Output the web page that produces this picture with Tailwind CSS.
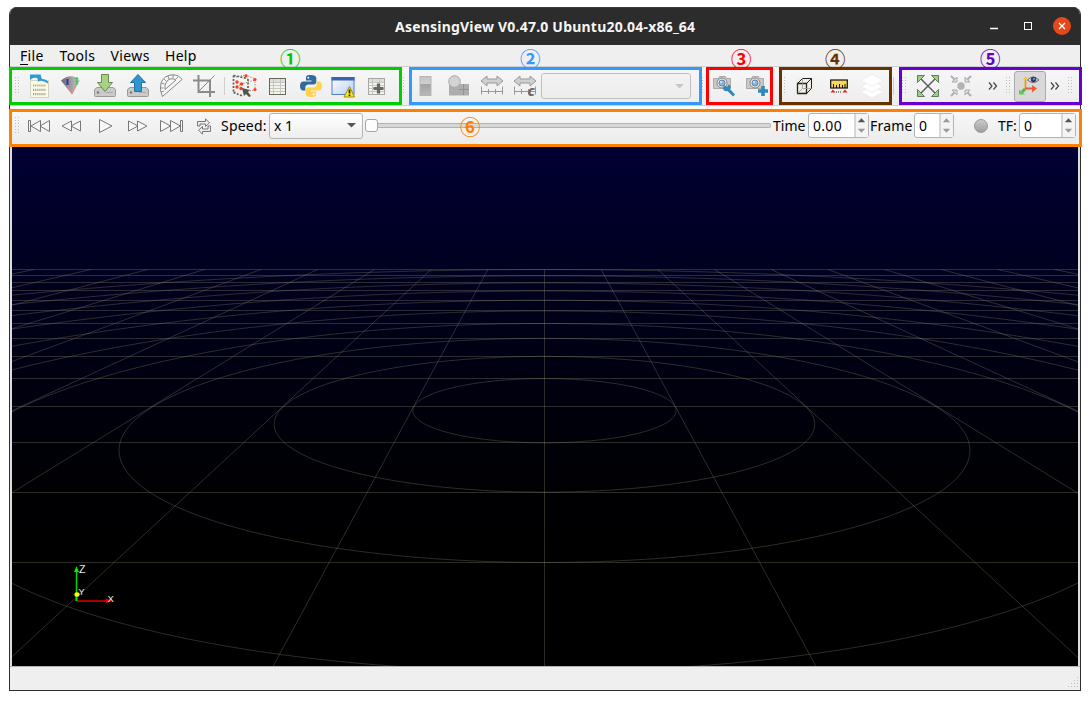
<!DOCTYPE html>
<html lang="en">
<head>
<meta charset="utf-8">
<title>AsensingView</title>
<script src="https://cdn.jsdelivr.net/npm/@tailwindcss/browser@4"></script>
</head>
<body class="relative h-[701px] w-[1091px] overflow-hidden bg-white font-['Noto_Sans','Open_Sans',sans-serif] text-[14px] text-black">
<svg width="0" height="0" class="absolute">
  <defs>
    <pattern id="dots" width="3" height="3" patternUnits="userSpaceOnUse"><rect width="1" height="1" fill="#bdbdbd"/></pattern>
    <linearGradient id="gr" x2="0" y2="1"><stop stop-color="#c4c4c4"/><stop offset=".38" stop-color="#d0d0d0"/><stop offset=".4" stop-color="#a2a2a2"/><stop offset="1" stop-color="#b9b9b9"/></linearGradient>
    <linearGradient id="win" x2="1" y2="1"><stop stop-color="#fff"/><stop offset="1" stop-color="#b5cdf5"/></linearGradient>
    <linearGradient id="fan"><stop stop-color="#666"/><stop offset=".6" stop-color="#a5a5a5"/><stop offset="1" stop-color="#ccc"/></linearGradient>
    <symbol id="drive" viewBox="0 0 24 24"><path d="M4 13.500h16l2.500 2v6q0 1-1 1h-19q-1 0-1-1v-6z" fill="#cacaca" stroke="#999"/><circle cx="5" cy="18.500" r="1.200" fill="#777"/><path d="M13 18.500h7" stroke="#aaa"/></symbol>
    <symbol id="camera" viewBox="0 0 24 24"><path d="M1.500 4.500h5l1-2h6l1 2h4v10h-17z" fill="#c9c9c9" stroke="#aaa"/><circle cx="10" cy="9" r="5" fill="#e6e6e6" stroke="#888"/><circle cx="10" cy="9" r="3" fill="#8fb4d4" stroke="#5f87ab"/><circle cx="9" cy="8" r="1" fill="#dcecf8"/></symbol>
    <symbol id="table" viewBox="0 0 17 17"><rect x=".5" y=".5" width="16" height="16" fill="#f4f4ee"/><path d="M1 1h15v3H1z" fill="#ddd"/><path d="M1 4.500h15M1 7.500h15M1 10.500h15M1 13.500h15M4.500 1v15M11.500 1v15" stroke="#c6c6be"/><rect x=".5" y=".5" width="16" height="16" fill="none" stroke="currentColor"/></symbol>
    <symbol id="width" viewBox="0 0 24 24"><path d="M1 7l6-5v3h10V2l6 5-6 5V9H7v3z" fill="#d0d0d0" stroke="#999"/><path d="M1.500 12.500v8M22.500 12.500v8M1.500 17.500h21M8.500 15v5M15.500 15v5" stroke="#999" fill="none"/></symbol>
    <symbol id="spin" viewBox="0 0 14 25"><path d="M0 0v25" stroke="#b5b5b5" stroke-width="2"/><path d="M3.500 9L7.500 4.500 11.500 9z" fill="currentColor"/><path d="M3.500 16L7.500 20.500 11.500 16z" fill="#999"/></symbol>
  </defs>
</svg>

<main class="absolute top-[7px] left-[9px] flex h-[684px] w-[1072px] flex-col overflow-hidden rounded-t-[8px] border border-t-0 border-[#2f2f30] bg-[#efefef]">
  <header class="relative flex h-[38px] shrink-0 items-center bg-[#2c2c2c] pt-px pr-[8px] shadow-[inset_0_1px_0_#3d3d3d]">
    <h1 class="ml-[385px] w-[302px] text-[14px] leading-5 font-bold tracking-[0.21px] whitespace-nowrap text-[#f5f5f5]">AsensingView V0.47.0 Ubuntu20.04-x86_64</h1>
    <svg class="ml-auto" width="84" height="20" fill="none" stroke="#fff"><path d="M2 11.500h8" stroke-width="1.300"/><rect x="36.500" y="5.500" width="7" height="7"/><circle cx="74" cy="9" r="9" fill="#e5491b" stroke="none"/><path d="M71 6l6 6M77 6l-6 6" stroke-width="1.300"/></svg>
  </header>

  <nav class="flex h-[21px] shrink-0 items-center pl-[10px] leading-5 whitespace-nowrap">
    <span class="w-[39.5px] tracking-[0.3px]"><span class="inline-block h-[17px] border-b border-black leading-4">F</span>ile</span>
    <span class="w-[51px] tracking-[0.35px]">Tools</span>
    <span class="w-[54.5px] tracking-[0.4px]">Views</span>
    <span class="tracking-[0.3px]">Help</span>
  </nav>

  <div class="flex h-10 shrink-0 items-center border-y border-[#cfcfcf] bg-gradient-to-b from-[#f7f7f7] to-[#ededed]">
    <svg class="ml-[5px] mr-[2px]" width="5" height="18"><rect width="5" height="18" fill="url(#dots)"/></svg>
    <div class="flex">
      <div class="flex w-[33px] justify-center"><svg width="24" height="24"><path d="M3.500 6.500h18v17h-18z" fill="#fafae6" stroke="#d2d2be"/><path d="M3 6V.500h11l7 7v2Q14 5 11 8q0-3-1-4Q6 3 3 6z" fill="#2f9bd0"/><path d="M13.500.500H16l5.500 6.500Q17 4.500 15 5z" fill="#f3fafd"/><path d="M6 11.500h13M6 15.800h13M6 20.100h13" stroke="#a5a59b" stroke-width="2.200" stroke-dasharray="1.200 .900"/></svg></div>
      <div class="flex w-[33px] justify-center"><svg width="24" height="24"><path d="M1 6.500Q11-2 20 6.500L12 20.500z" fill="url(#fan)"/><path d="M7 10.500l5 9.500 4-9.500" stroke="#f08a8a" fill="none"/><path d="M7.500 5v6" stroke="#2431c4" stroke-width="2"/><path d="M16.800 3.500v7" stroke="#0cd142" stroke-width="2.600" stroke-dasharray="2 1"/></svg></div>
      <div class="flex w-[33px] justify-center"><svg width="24" height="24"><use href="#drive"/><path d="M8.500.500h7v8h4L12 17.500 4.500 8.500h4z" fill="#a8d184" stroke="#668e4e"/></svg></div>
      <div class="flex w-[33px] justify-center"><svg width="24" height="24"><use href="#drive"/><path d="M8.500 17.500h7v-9h4L12 .500 4.500 8.500h4z" fill="#2b97d0" stroke="#24709e"/></svg></div>
      <div class="flex w-[33px] justify-center"><svg width="24" height="24" fill="none" stroke="#858585"><path d="M3.500 22.500L23 5.500Q20 1 14 .800Q5 1 2 9Q0 16 3.500 22.500z" fill="#f7f7f7"/><path d="M6 15.500L17 6Q12 3 8 7Q5 11 6 15.500z"/><path d="M14 1v3M9 2l1 3M5 5l2 2M2.500 9l3 1M1.500 14h3M2 18l3-1M19 3l-2 2" stroke-width=".9"/></svg></div>
      <div class="flex w-[33px] justify-center"><svg width="24" height="24" fill="none" stroke="#8a8a8a" stroke-width="2"><path d="M6.500 1v17H23M1 6.500h17V23"/><path d="M7 17L22.500 1.500" stroke-width="1"/></svg></div>
    </div>
    <div class="ml-[4px] mr-[3px] h-[18px] w-px bg-[#cecece]"></div>
    <div class="flex">
      <div class="flex w-[33px] justify-center"><svg width="25" height="24"><path d="M1.500 1.500v17h2M1.500 1.500l14 3M1.500 18.500l9 3.500M16 5v10" fill="none" stroke="#5f5f50" stroke-width="1.700" stroke-dasharray="2 1.500"/><path d="M4 3l10-2M14 1l9 4v11l-6 1M5 13l4-3 14-4" fill="none" stroke="#777768" stroke-dasharray="1 1.500"/><g fill="#ff3c16"><circle cx="5" cy="8" r="1.700"/><circle cx="9.500" cy="10" r="1.700"/><circle cx="5" cy="13" r="1.700"/><circle cx="9" cy="14.500" r="1.700"/><circle cx="14" cy="1.800" r="1.600"/><circle cx="23" cy="5.500" r="1.600"/><circle cx="23" cy="15.500" r="1.600"/></g><path d="M10 14l8 2-2 2 3 4-2 1-3-3-2 2z" fill="#555448"/></svg></div>
      <div class="flex w-[33px] items-center justify-center text-[#686858]"><svg width="17" height="17"><use href="#table"/></svg></div>
      <div class="flex w-[33px] justify-center"><svg width="24" height="24"><path d="M11.500 1C7 1 7 2.500 7 4v2.500h5.500v1H4.500C2 7.500 1 9.500 1 12s1 4.500 3 4.500h2.300v-3c0-2 1.500-3 3-3h5.400c1.600 0 2.600-1 2.600-2.500V4c0-2-2-3-5.800-3z" fill="#316b9d"/><path d="M12.500 23c4.500 0 4.500-1.500 4.500-3v-2.500h-5.500v-1h8c2.500 0 3.500-2 3.500-4.500s-1-4.500-3-4.500h-2.300v3c0 2-1.500 3-3 3H9.300c-1.600 0-2.600 1-2.600 2.500V20c0 2 2 3 5.800 3z" fill="#ffd34c"/><circle cx="9.300" cy="3.800" r="1" fill="#fff"/><circle cx="14.700" cy="20.200" r="1" fill="#fff"/></svg></div>
      <div class="flex w-[33px] justify-center"><svg width="25" height="24"><rect x="1" y="3.500" width="22" height="17" fill="url(#win)" stroke="#527fc6"/><path d="M.500 3h23v3.500H.500z" fill="#3564b6"/><path d="M18.500 12.500l5 10.500h-10.500z" fill="#ffe61a" stroke="#9b8c14" stroke-linejoin="round"/><path d="M18.500 15.500v4M18.500 20.500v1.500" stroke="#222" stroke-width="1.700"/></svg></div>
      <div class="flex w-[33px] items-center justify-center text-[#a7a7a7]"><svg width="17" height="17"><use href="#table"/><path d="M10.500 5.500v10M5.500 10.500h10" stroke="#666" stroke-width="3.200"/></svg></div>
    </div>
    <svg class="ml-[10px]" width="2" height="18"><rect width="2" height="18" fill="url(#dots)"/></svg>
    <div class="ml-[4px] flex">
      <div class="flex w-[33px] justify-center"><svg width="24" height="24"><rect x="6" y="2.500" width="11" height="19" fill="url(#gr)" stroke="#b5b5b5"/></svg></div>
      <div class="flex w-[33px] justify-center"><svg width="24" height="24"><path d="M2 10h20v11.500H2z" fill="#adadad"/><path d="M12 15.500h10M16.500 10v11" stroke="#929292"/><circle cx="7.500" cy="7.500" r="5.800" fill="#d3d3d3" stroke="#aaa"/></svg></div>
      <div class="flex w-[33px] justify-center"><svg width="24" height="24"><use href="#width"/></svg></div>
      <div class="flex w-[33px] justify-center"><svg width="24" height="24"><use href="#width"/><text x="14.500" y="21.500" font-size="15" font-weight="bold" font-style="italic" fill="#666">c</text></svg></div>
    </div>
    <div class="flex h-[26px] w-[150px] items-center justify-end rounded-[3px] border border-[#bebebe] bg-gradient-to-b from-[#f3f3f3] to-[#ededed] pr-[6px]"><svg width="9" height="5"><path d="M0 0h9L4.500 4.500z" fill="#c7c7c7"/></svg></div>
    <svg class="ml-[11px]" width="2" height="18"><rect width="2" height="18" fill="url(#dots)"/></svg>
    <div class="ml-[3px] flex">
      <div class="flex w-[33px] justify-center"><svg width="24" height="24"><use href="#camera"/><path d="M12 11l3 2 1.500-2.500Q20 12 18 15l5 5.500-2 2-5.500-5.500q-4 1-4.500-3z" fill="#3288bd"/></svg></div>
      <div class="flex w-[33px] justify-center"><svg width="24" height="24"><use href="#camera"/><path d="M18 12v10M13 17h10" stroke="#3388ba" stroke-width="3.600"/></svg></div>
    </div>
    <svg class="ml-[8px] mr-[2px]" width="5" height="18"><rect width="5" height="18" fill="url(#dots)"/></svg>
    <div class="flex">
      <div class="flex w-[34px] items-center justify-center"><svg width="18" height="18"><path fill="#f0f0e4" d="M0 0h18v18H0z"/><g fill="none" stroke="#222"><path d="M1.500 6.500h9v10h-9z" stroke-width="1.300"/><path d="M1.500 6.500l5-5h9l-5 5M15.500 1.500v10l-5 5"/><path d="M1.500 16.500l5-5h9M6.500 1.500v10" stroke="#999" stroke-width=".8"/></g></svg></div>
      <div class="flex w-[33px] items-center justify-center"><svg width="18" height="15"><rect x=".7" y="1" width="16.600" height="8" fill="#f7d85b" stroke="#111" stroke-width="1.200"/><path d="M3.500 9V5M6.500 9V6M9.500 9V5M12.500 9V6M15 9V5" stroke="#111"/><path d="M.500 13.500l2.500-3 2.500 3zM12.500 13.500l2.500-3 2.500 3z" fill="#e52218"/><path d="M6 13h6" stroke="#222" stroke-dasharray="1 1"/></svg></div>
      <div class="flex w-[33px] justify-center"><svg width="24" height="24" fill="#fff" stroke="#ebebeb" stroke-width=".8"><path d="M12 12l11 6-11 6-11-6z"/><path d="M12 6.500l11 6-11 6-11-6z"/><path d="M12 .500l11 6-11 6-11-6z"/></svg></div>
    </div>
    <div class="ml-[5px] h-[18px] w-px bg-[#d0d0d0]"></div>
    <svg class="ml-[8px]" width="5" height="18"><rect width="5" height="18" fill="url(#dots)"/></svg>
    <div class="ml-[4px] flex">
      <div class="flex w-[33px] justify-center"><svg width="24" height="24"><path d="M4 4l16 16M20 4L4 20" stroke="#5e5e5e" stroke-width="1.500"/><path d="M1.500 1.500h7L6 4 4 6 1.500 8.500zM22.500 1.500h-7L18 4l2 2 2.500 2.500zM1.500 22.500h7L6 20l-2-2-2.500-2.500zM22.500 22.500h-7L18 20l2-2 2.500-2.500z" fill="#9fd08a" stroke="#56704d" stroke-width=".9"/></svg></div>
      <div class="flex w-[33px] justify-center"><svg width="24" height="24"><path d="M2 2l5 5M22 2l-5 5M2 22l5-5M22 22l-5-5" stroke="#b0b0b0" stroke-width="2"/><path d="M8 3v5H3L5.500 5.500zM16 3v5h5l-2.500-2.500zM8 21v-5H3l2.500 2.500zM16 21v-5h5l-2.500 2.500z" fill="#dedede" stroke="#aaa"/><circle cx="12" cy="12" r="3.700" fill="#b2b2b2"/></svg></div>
    </div>
    <svg class="ml-[11px]" width="10" height="10" fill="none" stroke="#444" stroke-width="1.200"><path d="M1 1.500L4 5 1 8.500M5.500 1.500l3 3.500-3 3.500"/></svg>
    <svg class="ml-[8px]" width="5" height="18"><rect width="5" height="18" fill="url(#dots)"/></svg>
    <div class="ml-[3px] flex h-[31px] w-[32px] items-center justify-center rounded-[3px] border border-[#aaa] bg-[#d9d9d9]"><svg width="24" height="24"><path d="M7.500 15V4" stroke="#eb9b0b" stroke-width="1.800"/><path d="M5 6l2.500-4L10 6z" fill="#ffc027"/><path d="M7 14.500h9" stroke="#dd6335" stroke-width="2"/><path d="M14 11l5 3.500-5 4z" fill="#f05c32"/><path d="M7 15l-3 3" stroke="#53b34c" stroke-width="3"/><path d="M1 15.500v5h6z" fill="#5cce4f"/><path d="M9.500 6Q15 0 21 6Q15 11 9.500 6z" fill="#e8e8ef" stroke="#666"/><circle cx="15.500" cy="5.500" r="2.800" fill="#333d79"/><circle cx="16" cy="5" r=".8" fill="#ddd"/></svg></div>
    <svg class="ml-[4px]" width="10" height="10" fill="none" stroke="#444" stroke-width="1.200"><path d="M1 1.500L4 5 1 8.500M5.500 1.500l3 3.500-3 3.500"/></svg>
    <svg class="ml-[8px]" width="5" height="18"><rect width="5" height="18" fill="url(#dots)"/></svg>
  </div>

  <div class="flex h-[41px] shrink-0 items-center bg-gradient-to-b from-[#fafafa] to-[#eaeaea] pb-[2px] leading-5 whitespace-nowrap">
    <svg class="ml-[5px] mr-[2px]" width="5" height="18"><rect width="5" height="18" fill="url(#dots)"/></svg>
    <div class="flex pt-px">
      <div class="flex w-[33px] items-center justify-center"><svg width="24" height="14" fill="#f8f8f8" stroke="#777"><path d="M1.500 1.500h2v11h-2zM13.500 1.500v11L4 7zM22.500 1.500v11L13 7z"/></svg></div>
      <div class="flex w-[33px] items-center justify-center"><svg width="24" height="14" fill="#f8f8f8" stroke="#777"><path d="M11.500 2v10L2 7zM20.500 2v10L11 7z"/></svg></div>
      <div class="flex w-[33px] items-center justify-center"><svg width="24" height="16" fill="#f8f8f8" stroke="#777"><path d="M6.500 1.500v13L19 8z"/></svg></div>
      <div class="flex w-[33px] items-center justify-center"><svg width="24" height="14" fill="#f8f8f8" stroke="#777"><path d="M2.500 2v10L12 7zM11.500 2v10L21 7z"/></svg></div>
      <div class="flex w-[33px] items-center justify-center"><svg width="24" height="14" fill="#f8f8f8" stroke="#777"><path d="M21.500 1.500h2v11h-2zM1.500 1.500v11L11.500 7zM11.500 1.500v11L21.500 7z"/></svg></div>
      <div class="flex w-[33px] items-center justify-center"><svg width="16" height="17" fill="#eee" stroke="#777"><path d="M1.500 8V3.500h8V.800L13.500 4.800l-4 3.700V6h-5.500v2zM14.500 8v5.500h-8v2.700l-4-4 4-3.700V11h5.500V8z"/></svg></div>
    </div>
    <span class="ml-[1px] w-[48px] tracking-[0.2px]">Speed:</span>
    <div class="flex h-[26px] w-[94px] items-center justify-between rounded-[3px] border border-[#b4b4b4] bg-gradient-to-b from-white to-[#eee] px-[4px]"><span>x 1</span><svg class="mr-[2px]" width="9" height="5"><path d="M0 0h9L4.500 4.500z" fill="#555"/></svg></div>
    <div class="ml-[2px] flex w-[406px] items-center"><i class="h-[13px] w-[13px] shrink-0 rounded-[3px] border border-[#a5a5a5] bg-[#fdfdfd]"></i><i class="h-[5px] flex-1 rounded-r-[2px] border border-l-0 border-[#b2b2b2] bg-[#d8d8d8]"></i></div>
    <span class="ml-[2px] w-[35px]">Time</span>
    <div class="flex h-[25px] w-[61px] items-center justify-between rounded-[3px] border border-[#b4b4b4] bg-white pl-[4px]"><span class="tracking-[0.3px]">0.00</span><svg class="h-[23px] w-[14px] shrink-0 bg-[#f4f4f4] text-[#555]" viewBox="0 0 14 25"><use href="#spin"/></svg></div>
    <span class="ml-[1px] w-[44px] tracking-[0.2px]">Frame</span>
    <div class="flex h-[25px] w-[40px] items-center justify-between rounded-[3px] border border-[#b4b4b4] bg-white pl-[4px]"><span>0</span><svg class="h-[23px] w-[14px] shrink-0 bg-[#f4f4f4] text-[#999]" viewBox="0 0 14 25"><use href="#spin"/></svg></div>
    <i class="ml-[20px] h-[14px] w-[14px] rounded-full border border-[#999] bg-gradient-to-b from-[#ccc] to-[#9e9e9e]"></i>
    <span class="ml-[10px] w-[21px]">TF:</span>
    <div class="flex h-[25px] w-[57px] items-center justify-between rounded-[3px] border border-[#b4b4b4] bg-white pl-[4px]"><span>0</span><svg class="h-[23px] w-[14px] shrink-0 bg-[#f4f4f4] text-[#555]" viewBox="0 0 14 25"><use href="#spin"/></svg></div>
  </div>

  <section class="h-[519px] shrink-0 border-x-2 border-[#dedede]">
    <div class="h-[519px] w-[1066px] bg-gradient-to-b from-[#000033] to-black">
      <svg width="1066" height="519" viewBox="12 147 1066 519" fill="none">
        <g id="grid" stroke="#84806a" stroke-opacity=".34"></g>
        <path d="M76.500 601V571" stroke="#00d800" stroke-width="1.500"/><path d="M77 601h30" stroke="#d80000" stroke-width="1.500"/>
        <path d="M76.500 566l2.500 6h-5z" fill="#00f000"/><path d="M106 598.500l7 2.500-7 2z" fill="#e00000"/><ellipse cx="77" cy="594.500" rx="2.600" ry="2.300" fill="#ff0"/><path d="M76.500 597v4" stroke="#00d800" stroke-width="2"/>
        <g fill="#eee" font-size="10.500" font-family="Liberation Sans, sans-serif"><text x="79" y="572.500">Z</text><text x="78.500" y="595" font-size="9">Y</text><text x="107.500" y="601.500" font-size="9.500">X</text></g>
      </svg>
    </div>
  </section>

  <footer class="flex flex-1 items-end justify-end border-t border-[#b5b5b5] pr-px pb-px"><svg width="12" height="12" fill="#bbb"><path d="M10 0h1v1h-1zM7 3h1v1H7zM10 3h1v1h-1zM4 6h1v1H4zM7 6h1v1H7zM10 6h1v1h-1zM1 9h1v1H1zM4 9h1v1H4zM7 9h1v1H7zM10 9h1v1h-1z"/></svg></footer>
</main>

<!-- numbered callouts over the toolbars -->
<div class="font-['Noto_Sans_CJK_SC',sans-serif] text-[20.5px] leading-5 font-bold">
  <span class="absolute top-[48px] left-[280px] text-[#00c800]">①</span>
  <span class="absolute top-[48px] left-[520px] text-[#3399ff]">②</span>
  <span class="absolute top-[48px] left-[731px] text-[#ff0000]">③</span>
  <span class="absolute top-[48px] left-[825px] text-[#663300]">④</span>
  <span class="absolute top-[48px] left-[980px] text-[#6600cc]">⑤</span>
  <span class="absolute top-[116px] left-[460px] text-[#ff8000]">⑥</span>
</div>
<div class="absolute top-[67px] left-[9px] h-[38px] w-[393px] border-3 border-[#00cc00]"></div>
<div class="absolute top-[67px] left-[409px] h-[38px] w-[293px] border-3 border-[#3399ff]"></div>
<div class="absolute top-[67px] left-[706px] h-[38px] w-[67px] border-3 border-[#ff0000]"></div>
<div class="absolute top-[67px] left-[779px] h-[38px] w-[113px] border-3 border-[#663300]"></div>
<div class="absolute top-[67px] left-[899px] h-[38px] w-[183px] border-3 border-[#6600cc]"></div>
<div class="absolute top-[109px] left-[9px] h-[38px] w-[1073px] border-3 border-[#ff8000]"></div>

<script>
// Ground grid: cells and 10 range rings, in perspective.
const horizon = 164.7, scaleY = 1849.8, scaleX = 1001, eye = 7.65, midX = 544.5;
const project = (x, z) => [midX + scaleX * x / (z + eye), horizon + scaleY / (z + eye)];
const grid = document.getElementById('grid');
const add = d => {
  const p = document.createElementNS('http://www.w3.org/2000/svg', 'path');
  p.setAttribute('d', d);
  grid.appendChild(p);
};
const line = pts => add('M' + pts.map(p => p[0].toFixed(2) + ' ' + p[1].toFixed(2)).join('L'));
for (let z = -3; z <= 10; z++) {
  const y = Math.floor(project(0, z)[1]) + 0.5;
  add('M12 ' + y + 'H1079');
}
for (let x = -10; x <= 10; x++) line([project(x, 10), project(x, -4.2)]);
for (let r = 1; r <= 10; r++) {
  const pts = [];
  // Start at the near point so that a ring cut off by the camera stays one arc.
  for (let a = 0; a <= 360; a++) {
    const t = (a - 90) * Math.PI / 180, z = r * Math.sin(t);
    if (z > -6) pts.push(project(r * 0.997 * Math.cos(t), z));
  }
  line(pts);
}
</script>
</body>
</html>
